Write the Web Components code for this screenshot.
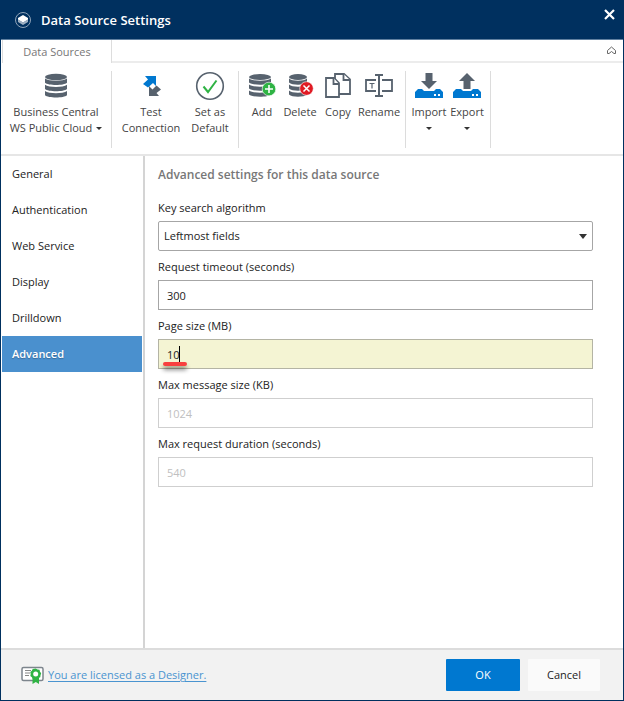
<!DOCTYPE html>
<html lang="en">
<head>
<meta charset="utf-8">
<title>Data Source Settings</title>
<style>
  body {
    margin: 0;
    font: 11px/16px "Open Sans", "Noto Sans", sans-serif;
    color: #222;
  }
</style>
</head>
<body>
<settings-window></settings-window>

<script>
const icons = {
  database: `<svg width="24" height="26" viewBox="0 0 24 26"><g fill="#57626e"><ellipse cx="12" cy="4" rx="11" ry="3.2"/><path d="M1 5.6c4 3 18 3 22 0v4.2c-3 3-19 3-22 0zM1 11.8c4 3 18 3 22 0V16c-3 3-19 3-22 0zM1 18c4 3 18 3 22 0v4.2c-3 3-19 3-22 0z"/></g></svg>`,
  test: `<svg width="22" height="22" viewBox="0 0 22 22"><path fill="#57626e" d="M9 21V11l3.500 3.500 4-4 4.500 4-4.500 3.500 2.500 3z"/><path fill="#0078d0" d="M5 1h11v10l-3-3-5 4.500L3 9l5-4.500z"/></svg>`,
  check: `<svg width="30" height="30" viewBox="0 0 30 30" fill="none"><circle cx="15" cy="15" r="13.3" stroke="#57626e" stroke-width="1.6"/><path d="M8.5 15.5l4.5 5.5 8.5-11.5" stroke="#2fb344" stroke-width="2"/></svg>`,
  add: `<svg width="28" height="28" viewBox="0 0 28 28"><g fill="#57626e"><ellipse cx="12" cy="5" rx="11" ry="3"/><path d="M1 6.5c4 3 18 3 22 0v4c-3 3-19 3-22 0zM1 12.5c4 3 18 3 22 0v4c-3 3-19 3-22 0zM1 18.5c4 3 18 3 22 0v4c-3 3-19 3-22 0z"/></g><circle cx="21" cy="17" r="6.800" fill="#2fb344" stroke="#fff" stroke-width=".6"/><path d="M17 17h8M21 13v8" stroke="#fff" stroke-width="1.6"/></svg>`,
  remove: `<svg width="28" height="28" viewBox="0 0 28 28"><g fill="#57626e"><ellipse cx="12" cy="5" rx="9" ry="3"/><path d="M3 6.500c3 3 15 3 18 0v4c-3 3-15 3-18 0zM3 12.500c3 3 15 3 18 0v4c-3 3-15 3-18 0zM3 18.500c3 3 15 3 18 0v4c-3 3-15 3-18 0z"/></g><circle cx="20.500" cy="16.500" r="6.800" fill="#e01b24" stroke="#fff" stroke-width=".6"/><path d="M17.500 13.500l6 6m0-6l-6 6" stroke="#fff" stroke-width="1.5"/></svg>`,
  copy: `<svg width="26" height="28" viewBox="0 0 26 28" fill="#fff" stroke="#57626e" stroke-width="1.800"><path d="M10 2h9l6 5.500V22H10z"/><path d="M18.500 2v6H25"/><path d="M1 6h8l5 5v14H1z"/><path d="M8.500 6v6H14"/></svg>`,
  rename: `<svg width="28" height="28" viewBox="0 0 28 28" fill="none" stroke="#57626e" stroke-width="1.800"><path d="M11 8H1v11h10M17 8h10v11H17"/><path d="M10 3h8M14 3v21M10 24h8" stroke-width="2"/><path d="M4.500 11.500h5M7 11.500V16.500" stroke-width="1.200"/></svg>`,
  import: `<svg width="28" height="28" viewBox="0 0 28 28"><path fill="#57626e" d="M10.500 1h7v8H22l-8 8-8-8h4.500z"/><path fill="#0078d0" d="M3 17h4l2 2h10l2-2h4l3 3v6H0v-6z"/><path fill="#fff" d="M19 22h2v2h-2zM23 22h2v2h-2z"/></svg>`,
  export: `<svg width="28" height="28" viewBox="0 0 28 28"><path fill="#57626e" d="M14 1l8 8h-4.500v8h-7V9H6z"/><path fill="#0078d0" d="M3 17h5l2 2h8l2-2h5l3 3v6H0v-6z"/><path fill="#fff" d="M19 22h2v2h-2zM23 22h2v2h-2z"/></svg>`
};

class TitleBar extends HTMLElement {
  constructor() {
    super();
    this.attachShadow({ mode: 'open' }).innerHTML = `
      <style>
        :host {
          display: flex; align-items: center; gap: 9px;
          height: 39px; padding: 0 0 0 13px;
          background: #00305f; color: #fff;
          border-bottom: 1px solid #6080a0;
        }
        h1 { margin: 0; flex: 1; font-size: 13px; font-weight: 600; }
        svg { display: block; }
        button {
          align-self: flex-start; padding: 8px 7px; margin: 0;
          border: 0; background: none;
        }
      </style>
      <svg width="18" height="18" viewBox="0 0 18 18">
        <circle cx="9" cy="9" r="7.500" fill="none" stroke="#8fa3b8"/>
        <path d="M4 8.500l5 3 5-3v2.500l-5 3-5-3z" fill="#9fb0c2"/>
        <path d="M9 4l5 3v1.500l-5 3-5-3V7z" fill="#fff"/>
      </svg>
      <h1><slot></slot></h1>
      <button type="button" aria-label="Close">
        <svg width="13" height="13" viewBox="0 0 13 13"><path d="M2 2l9 9M11 2l-9 9" stroke="#fff" stroke-width="2.200"/></svg>
      </button>
    `;
  }
}
customElements.define('title-bar', TitleBar);

class TabStrip extends HTMLElement {
  constructor() {
    super();
    this.attachShadow({ mode: 'open' }).innerHTML = `
      <style>
        :host { display: flex; height: 23px; padding-left: 1px; }
        .tab {
          font: inherit; color: #777; background: #fff;
          width: 110px; padding: 0; margin: 0;
          border: 1px solid #ddd; border-width: 0 1px;
        }
        .rest {
          flex: 1; display: flex; justify-content: flex-end; align-items: center;
          border-bottom: 2px solid #ececec;
        }
        .rest button { border: 0; background: none; padding: 0 6px; }
        svg { display: block; }
      </style>
      <button class="tab" type="button" role="tab" aria-selected="true"><slot></slot></button>
      <div class="rest">
        <button type="button" aria-label="Collapse ribbon">
          <svg width="11" height="9" viewBox="0 0 11 9" fill="none" stroke="#666"><path d="M1.500 4.500l4-3.500 4 3.500v3H8L5.500 5.500 3 7.500H1.500z"/></svg>
        </button>
      </div>
    `;
  }
}
customElements.define('tab-strip', TabStrip);

class RibbonGroup extends HTMLElement {
  constructor() {
    super();
    this.attachShadow({ mode: 'open' }).innerHTML = `
      <style>
        :host {
          display: flex; justify-content: center; box-sizing: border-box;
          height: 77px; padding: 0 4px; border-right: 1px solid #dcdcdc;
        }
      </style>
      <slot></slot>
    `;
  }
}
customElements.define('ribbon-group', RibbonGroup);

class RibbonButton extends HTMLElement {
  connectedCallback() {
    const lines = this.getAttribute('label').split('|');
    const arrow = '<i></i>';
    const menu = this.hasAttribute('menu');
    const second = lines[1] ? `<span>${lines[1]}${menu ? arrow : ''}</span>` : menu ? `<span>${arrow}</span>` : '';
    this.attachShadow({ mode: 'open' }).innerHTML = `
      <style>
        :host { display: block; width: var(--button-width, 38px); }
        button {
          display: flex; flex-direction: column; align-items: center;
          width: 100%; padding: 0; border: 0; background: none;
          font: inherit; color: #444; white-space: nowrap;
        }
        .icon {
          display: flex; align-items: center; justify-content: center;
          height: 30px; margin-bottom: 3px;
        }
        span { display: flex; align-items: center; justify-content: center; gap: 4px; height: 16px; }
        i { border: 3px solid transparent; border-top-color: #333; border-bottom: 0; }
      </style>
      <button type="button">
        <div class="icon">${icons[this.getAttribute('icon')]}</div>
        <span>${lines[0]}</span>${second}
      </button>
    `;
  }
}
customElements.define('ribbon-button', RibbonButton);

class NavItem extends HTMLElement {
  constructor() {
    super();
    this.attachShadow({ mode: 'open' }).innerHTML = `
      <style>
        :host { display: block; }
        a {
          display: flex; align-items: center; height: 36px; padding: 0 10px;
          color: inherit; text-decoration: none;
        }
        :host([selected]) a {
          background: #4a90ce; color: #fff; font-weight: 600;
          text-shadow: 0 1px 1px #3a6a98;
        }
      </style>
      <a href="#"><slot></slot></a>
    `;
  }
}
customElements.define('nav-item', NavItem);

class SettingField extends HTMLElement {
  connectedCallback() {
    const value = this.getAttribute('value');
    const disabled = this.hasAttribute('disabled') ? 'disabled' : '';
    const control = this.hasAttribute('choice')
      ? `<select id="control"><option>${value}</option></select>
         <svg class="arrow" width="8" height="5" viewBox="0 0 8 5"><path d="M0 0h8L4 5z" fill="#333"/></svg>`
      : `<input id="control" type="text" value="${value}" ${disabled}>`;
    this.attachShadow({ mode: 'open' }).innerHTML = `
      <style>
        :host { display: block; }
        label { display: block; height: 21px; line-height: 16px; }
        .box { position: relative; margin-bottom: 8px; }
        input, select {
          display: block; box-sizing: border-box; width: 100%; height: 30px;
          margin: 0; padding: 0 8px; border: 1px solid #a6a6a6; border-radius: 0;
          background: #fff; font: inherit; color: #222; outline: 0;
        }
        select { appearance: none; padding: 0 5px; border-radius: 2px; }
        input:disabled { border-color: #cfcfcf; color: #c0c0c0; }
        .arrow { position: absolute; right: 6px; top: 13px; }
        .caret, .mark { display: none; position: absolute; }
        :host([editing]) input { background: #f4f4d3; border-color: #b4b4a4; }
        :host([editing]) .caret {
          display: block; left: 21px; top: 7px; width: 1px; height: 16px; background: #000;
        }
        :host([editing]) .mark {
          display: block; left: 5px; top: 23px; width: 24px; height: 4px;
          border-radius: 2px; background: #f8403f; box-shadow: 0 4px 4px #0007;
        }
      </style>
      <label for="control">${this.getAttribute('label')}</label>
      <div class="box">${control}<div class="caret"></div><div class="mark"></div></div>
    `;
  }
}
customElements.define('setting-field', SettingField);

class DialogButton extends HTMLElement {
  constructor() {
    super();
    this.attachShadow({ mode: 'open' }).innerHTML = `
      <style>
        :host { display: block; }
        button {
          width: 72px; height: 32px; padding: 0; border: 0; border-radius: 1px;
          background: #fafafa; color: #222; font: inherit;
        }
        :host([primary]) button { width: 74px; background: #0078d0; color: #fff; }
      </style>
      <button type="button"><slot></slot></button>
    `;
  }
}
customElements.define('dialog-button', DialogButton);

class LicenseLink extends HTMLElement {
  constructor() {
    super();
    this.attachShadow({ mode: 'open' }).innerHTML = `
      <style>
        :host { display: flex; align-items: center; gap: 4px; }
        a { color: #4a94d0; text-underline-offset: 2px; }
      </style>
      <svg width="23" height="18" viewBox="0 0 23 18">
        <rect x="1" y="1.500" width="21" height="13" rx="1.500" fill="#fff" stroke="#7d858d" stroke-width="1.500"/>
        <path d="M4 4.500h6M4 7h5M4 9.500h4" stroke="#888"/>
        <path fill="#2fb344" d="M11.500 11.500h6.500v6.500l-3.200-2-3.300 2z"/>
        <path fill="#2fb344" d="M14.700 2.500l1.800.9 2 .3.500 2 1.200 1.600-.7 1.900-.2 2-1.900.8-1.500 1.400-2-.5-2 .1-1-1.700-1.600-1.200.4-2-.4-2 1.500-1.300.9-1.800z"/>
        <circle cx="14.700" cy="8" r="2.500" fill="#fff"/>
      </svg>
      <a href="#"><slot></slot></a>
    `;
  }
}
customElements.define('license-link', LicenseLink);

class SettingsWindow extends HTMLElement {
  constructor() {
    super();
    this.attachShadow({ mode: 'open' }).innerHTML = `
      <style>
        :host {
          display: flex; flex-direction: column; box-sizing: border-box;
          min-height: 100vh; background: #fff;
          border: 1px solid #00305f; border-top: 0;
        }
        .ribbon {
          display: flex; padding: 8px 0 6px; border-bottom: 2px solid #e6e6e6;
        }
        .source { --button-width: 102px; }
        .test { --button-width: 70px; }
        .default { --button-width: 48px; }
        .rename { --button-width: 44px; }
        main { flex: 1; display: flex; }
        nav { width: 144px; box-sizing: border-box; padding: 0 1px; border-right: 2px solid #d4d4d4; }
        section { flex: 1; padding: 11px 30px 20px 13px; }
        h2 { margin: 0 0 17px; font-size: 12px; font-weight: 600; line-height: 16px; color: #777; }
        footer {
          display: flex; align-items: center; gap: 8px;
          height: 50px; padding: 0 23px 0 20px;
          background: #f2f2f2; border-top: 2px solid #dcdcdc;
        }
        license-link { flex: 1; }
      </style>
      <title-bar>Data Source Settings</title-bar>
      <tab-strip>Data Sources</tab-strip>
      <div class="ribbon">
        <ribbon-group class="source">
          <ribbon-button icon="database" label="Business Central|WS Public Cloud" menu></ribbon-button>
        </ribbon-group>
        <ribbon-group>
          <ribbon-button class="test" icon="test" label="Test|Connection"></ribbon-button>
          <ribbon-button class="default" icon="check" label="Set as|Default"></ribbon-button>
        </ribbon-group>
        <ribbon-group>
          <ribbon-button icon="add" label="Add"></ribbon-button>
          <ribbon-button icon="remove" label="Delete"></ribbon-button>
          <ribbon-button icon="copy" label="Copy"></ribbon-button>
          <ribbon-button class="rename" icon="rename" label="Rename"></ribbon-button>
        </ribbon-group>
        <ribbon-group>
          <ribbon-button icon="import" label="Import" menu></ribbon-button>
          <ribbon-button icon="export" label="Export" menu></ribbon-button>
        </ribbon-group>
      </div>
      <main>
        <nav>
          <nav-item>General</nav-item>
          <nav-item>Authentication</nav-item>
          <nav-item>Web Service</nav-item>
          <nav-item>Display</nav-item>
          <nav-item>Drilldown</nav-item>
          <nav-item selected>Advanced</nav-item>
        </nav>
        <section>
          <h2>Advanced settings for this data source</h2>
          <setting-field label="Key search algorithm" value="Leftmost fields" choice></setting-field>
          <setting-field label="Request timeout (seconds)" value="300"></setting-field>
          <setting-field label="Page size (MB)" value="10" editing></setting-field>
          <setting-field label="Max message size (KB)" value="1024" disabled></setting-field>
          <setting-field label="Max request duration (seconds)" value="540" disabled></setting-field>
        </section>
      </main>
      <footer>
        <license-link>You are licensed as a Designer.</license-link>
        <dialog-button primary>OK</dialog-button>
        <dialog-button>Cancel</dialog-button>
      </footer>
    `;
  }
}
customElements.define('settings-window', SettingsWindow);
</script>
</body>
</html>
